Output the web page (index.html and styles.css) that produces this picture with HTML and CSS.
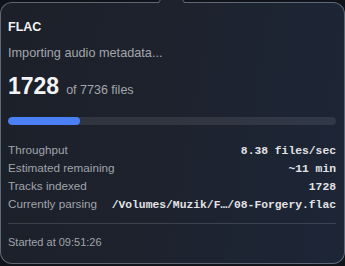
FILE: index.html
```html
<!DOCTYPE html>
<html>
<head>
<meta charset="utf-8">
<link rel="stylesheet" href="styles.css">
</head>
<body>
<div class="panel">
  <div class="arrow"></div>
  <div class="title">FLAC</div>
  <div class="status">Importing audio metadata...</div>
  <div class="count"><span class="big">1728</span><span class="of">of 7736 files</span></div>
  <div class="bar"><div class="fill" style="width:22%"></div></div>
  <div class="rows">
    <div class="row"><span class="label">Throughput</span><span class="value">8.38 files/sec</span></div>
    <div class="row"><span class="label">Estimated remaining</span><span class="value">~11 min</span></div>
    <div class="row"><span class="label">Tracks indexed</span><span class="value">1728</span></div>
    <div class="row"><span class="label">Currently parsing</span><span class="value">/Volumes/Muzik/F…/08-Forgery.flac</span></div>
  </div>
  <div class="divider"></div>
  <div class="started">Started at 09:51:26</div>
</div>
</body>
</html>
```

FILE: styles.css
```css
html, body {
  margin: 0;
  padding: 0;
  background: #101319;
  width: 345px;
  height: 266px;
  overflow: hidden;
}
.panel {
  position: relative;
  box-sizing: border-box;
  margin-top: 2px;
  width: 345px;
  height: 262px;
  border: 1px solid rgba(150, 160, 175, 0.55);
  border-radius: 12px;
  background: linear-gradient(100deg, #1c2029 0%, #1d222d 45%, #1d2637 100%);
  padding: 16px 8px 0 7px;
  font-family: "Liberation Sans", Arial, sans-serif;
  color: #ececee;
}
.arrow {
  position: absolute;
  left: 161px;
  top: -11px;
  width: 18px;
  height: 18px;
  transform: rotate(45deg);
  border-radius: 3px 0 0 0;
  background: #1d222d;
  border-top: 1px solid rgba(150, 160, 175, 0.55);
  border-left: 1px solid rgba(150, 160, 175, 0.55);
}
.title {
  font-size: 12.5px;
  line-height: 16px;
  font-weight: 700;
  color: #f2f2f4;
}
.status {
  margin-top: 10px;
  font-size: 12.7px;
  line-height: 16px;
  color: #a2a6ad;
}
.count {
  margin-top: 12px;
  line-height: 26px;
  height: 26px;
}
.big {
  font-size: 23px;
  font-weight: 700;
  color: #f4f4f6;
}
.of {
  margin-left: 7px;
  font-size: 12.5px;
  color: #a2a6ad;
}
.bar {
  margin-top: 18px;
  height: 8px;
  border-radius: 4px;
  background: rgba(255, 255, 255, 0.09);
  overflow: hidden;
}
.fill {
  height: 100%;
  border-radius: 4px;
  background: #4a80f4;
}
.rows {
  margin-top: 16px;
}
.row {
  display: flex;
  justify-content: space-between;
  align-items: baseline;
  height: 18px;
  line-height: 18px;
}
.label {
  font-size: 11.7px;
  color: #a0a4ab;
}
.value {
  font-family: "Liberation Mono", "DejaVu Sans Mono", monospace;
  font-size: 11.33px;
  font-weight: 700;
  color: #e2e3e6;
}
.divider {
  margin-top: 10px;
  height: 1px;
  background: rgba(255, 255, 255, 0.14);
}
.started {
  margin-top: 10px;
  font-size: 11px;
  line-height: 16px;
  color: #a0a4ab;
}
```
